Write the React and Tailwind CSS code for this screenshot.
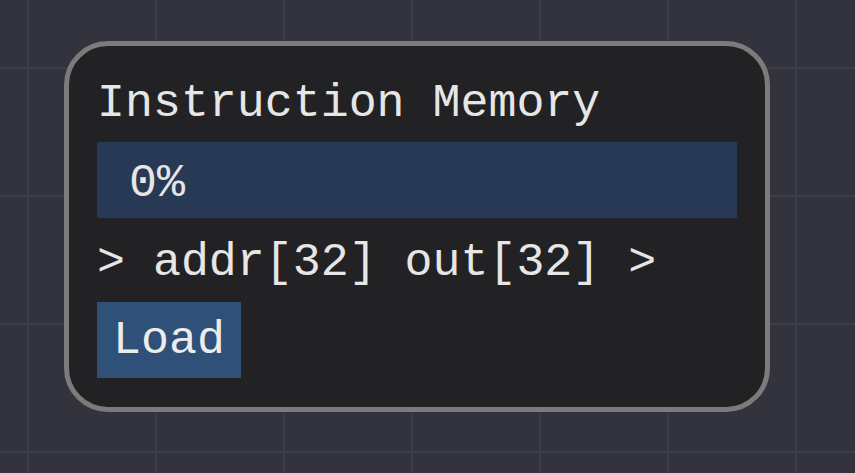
export default function App() {
  return (
    <div
      className="h-[473px] w-[855px] overflow-hidden bg-[#33333d] bg-[linear-gradient(to_right,#3d3d47_2px,transparent_2px),linear-gradient(to_bottom,#3d3d47_2px,transparent_2px)] bg-size-[128px_128px] bg-position-[27px_67px] pl-[64px] pt-[41px] text-[#e6e6e6]"
      style={{ fontFamily: '"Liberation Mono", "DejaVu Sans Mono", monospace' }}
    >
      <div className="w-[706px] rounded-[44px] border-[5px] border-[#7b7b7b] bg-[rgba(34,34,36,0.95)] pl-[28px] pr-[28px] pt-[35px] pb-[29px] text-[46.6px] leading-none">
        <div className="whitespace-pre">Instruction Memory</div>

        <div className="mt-[14px] h-[76px] bg-[#283955] pl-[32px] pt-[19px]">0%</div>

        <div className="mt-[22px] whitespace-pre">&gt; addr[32] out[32] &gt;</div>

        <button className="mt-[16px] block h-[76px] bg-[#2f5079] px-[16px] pt-[2px] text-[#ececec]">
          Load
        </button>
      </div>
    </div>
  );
}
